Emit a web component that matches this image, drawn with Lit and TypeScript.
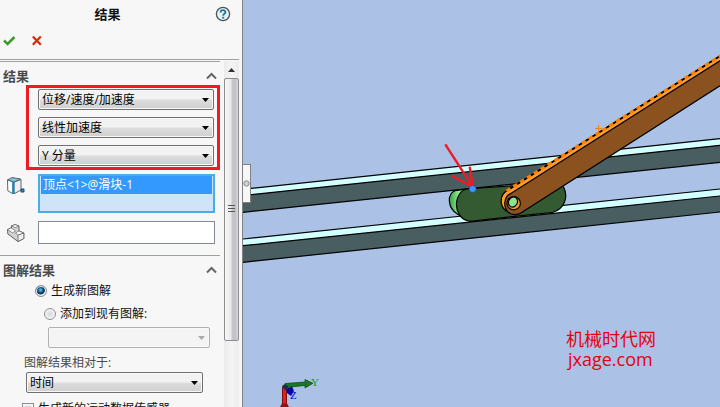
import { LitElement, html, css, svg } from "lit";
import { customElement, property } from "lit/decorators.js";

const controls = css`
  * { box-sizing: border-box; }
  select, input, button { font: inherit; margin: 0; }
  .combo { position: relative; display: block; height: 21px; }
  .combo select {
    appearance: none; width: 100%; height: 21px; padding: 0 16px 0 3px;
    border: 1px solid #707070; border-radius: 2px; color: #000; line-height: 19px;
    background: linear-gradient(#f2f2f2 0 48%, #dddddd 52%, #cfcfcf);
    box-shadow: inset 0 0 0 1px #f8f8f8;
  }
  .combo select:disabled { border-color: #adb2b5; background: #f4f4f4; opacity: 1; }
  .combo svg { position: absolute; right: 5px; top: 9px; width: 7px; height: 4px; fill: #000; pointer-events: none; }
  .combo select:disabled + svg { fill: #aaa; }
`;

const combo = (label: string, value: string, disabled = false) => html`
  <span class="combo">
    <select aria-label=${label} ?disabled=${disabled}><option>${value}</option></select>
    <svg viewBox="0 0 7 4"><path d="M0 0h7L3.5 4z"/></svg>
  </span>`;

@customElement("panel-section")
class PanelSection extends LitElement {
  @property() heading = "";
  static styles = css`
    :host { display: block; border-top: 1px solid #a0a0a0; }
    header { box-sizing: border-box; display: flex; align-items: center; justify-content: space-between; height: 23px; padding: 4px 3px 0; }
    h2 { margin: 0; font-size: 13px; line-height: 18px; font-weight: 700; color: #4a4a4a; }
    button { display: flex; padding: 0; border: 0; background: none; }
    svg { width: 11px; height: 8px; fill: none; stroke: #666; stroke-width: 2; }
  `;
  render() {
    return html`<header><h2>${this.heading}</h2>
      <button aria-label="折叠"><svg viewBox="0 0 11 8"><path d="M1 6.5L5.5 2L10 6.5"/></svg></button>
    </header><slot></slot>`;
  }
}

@customElement("property-panel")
class PropertyPanel extends LitElement {
  static styles = [controls, css`
    :host { display: flex; flex-direction: column; background: #f7f7f7; border-right: 1px solid #808080; overflow: hidden; }
    .title { display: flex; align-items: center; height: 27px; padding-right: 11px; }
    h1 { flex: 1; margin: 0; text-align: center; font-size: 13px; line-height: 20px; color: #111; }
    button { display: flex; padding: 0; border: 0; background: none; }
    .help svg { width: 16px; height: 16px; }
    .actions { display: flex; align-items: center; gap: 16px; height: 27px; padding-left: 3px; }
    .actions svg { width: 13px; height: 11px; }
    .scroll { flex: 1; min-height: 0; display: flex; gap: 4px; margin: 5px 3px 0 0; border-top: 1px solid #a0a0a0; padding-top: 1px; }
    .form { flex: 1; min-width: 0; overflow: hidden; }
    .marked { display: flex; flex-direction: column; gap: 7px; margin-left: 26px; padding: 1px 3px 1px 9px; border: 3px solid #ed1c24; }
    .picks { display: grid; grid-template-columns: 38px 1fr; row-gap: 8px; padding: 4px 5px 11px 0; }
    .picks > svg { width: 18px; height: 18px; margin: 3px 0 0 7px; }
    ul { list-style: none; margin: 0; padding: 0 1px; height: 39px; border: 2px solid #4aaee6; background: #cfe4f8; }
    li { height: 18px; line-height: 18px; padding-left: 2px; background: #3399ff; color: #fff; }
    .picks input { width: 100%; height: 23px; border: 1px solid #828799; background: #fff; }
    .options { padding: 2px 0 0 35px; }
    label { display: flex; align-items: center; gap: 4px; height: 20px; color: #111; white-space: nowrap; }
    input[type="radio"] {
      appearance: none; width: 12px; height: 12px; border: 1px solid #8b8f92; border-radius: 50%;
      background: radial-gradient(#d4d6d9, #f5f5f5 75%); box-shadow: inset 0 0 0 1px #f4f4f4;
    }
    input[type="radio"]:checked { background: radial-gradient(circle at 45% 40%, #7fd0f0, #15618f 28%, #0b3050 50%, #d9dde0 60%); }
    .second { margin: 3px 0 3px 9px; }
    .existing { margin: 0 10px 0 13px; }
    .relative { height: 18px; margin-top: 6px; padding-left: 24px; color: #4a4a4a; }
    .time { margin: 0 17px 0 26px; }
    .sensor { margin: 6px 0 0 22px; }
    input[type="checkbox"] { appearance: none; width: 12px; height: 12px; border: 1px solid #8b8f92; background: #d0d3d8; box-shadow: inset 0 0 0 2px #f4f4f4; }
    .bar { flex: 0 0 15px; display: flex; flex-direction: column; background: linear-gradient(90deg, #ebebeb, #f4f4f4 50%, #ececec); }
    .up { flex: 0 0 17px; align-items: center; justify-content: center; }
    .up svg { width: 7px; height: 4px; }
    .thumb {
      flex: 0 0 76%; display: flex; align-items: center; justify-content: center; border: 1px solid #8d8d8d; border-radius: 2px;
      background: linear-gradient(90deg, #f6f6f6, #eaeaec 45%, #c6c6ca 55%, #c0c0c6 80%, #dcdce0);
    }
    .thumb svg { width: 7px; height: 8px; }
  `];
  render() {
    return html`
      <div class="title">
        <h1>结果</h1>
        <button class="help" aria-label="帮助"><svg viewBox="0 0 16 16">
          <circle cx="8" cy="8" r="6.6" fill="#e9f0f3" stroke="#4b555b" stroke-width="1.3"/>
          <path d="M5.6 6.4C5.6 3.4 10.5 3.5 10.4 6.2C10.3 7.8 8.2 7.8 8.2 9.7" fill="none" stroke="#1d79a5" stroke-width="1.9"/>
          <path d="M7.2 10.8h2v1.8h-2z" fill="#1d79a5"/></svg></button>
      </div>
      <div class="actions">
        <button aria-label="确定"><svg viewBox="0 0 13 11"><path d="M1 5.5L4.6 9L11.5 2" fill="none" stroke="#3d9d27" stroke-width="2.6"/></svg></button>
        <button aria-label="取消"><svg viewBox="0 0 13 11"><path d="M.8 1.5L8.8 9.8M8.8 1.5L.8 9.8" fill="none" stroke="#d82a0c" stroke-width="2.3"/></svg></button>
      </div>
      <div class="scroll">
        <div class="form">
          <panel-section heading="结果">
            <div class="marked">
              ${combo("类别", "位移/速度/加速度")}
              ${combo("子类别", "线性加速度")}
              ${combo("结果分量", "Y 分量")}
            </div>
            <div class="picks">
              <svg viewBox="0 0 18 18" stroke-linejoin="round">
                <path d="M.5 3L5 .5L13.5 2L7 5.2z" fill="#79c5e5" stroke="#4a5a62" stroke-width=".9"/>
                <path d="M.5 3L6 5V16.8L.8 13.8z" fill="#fff" stroke="#555" stroke-width=".9"/>
                <path d="M7 5.2L14 2.5V13L7 16.8z" fill="#eee" stroke="#555" stroke-width=".9"/>
                <path d="M6.3 5V17" stroke="#178ac4" stroke-width="2.2"/>
                <path d="M14 12h3v3h-3z" fill="#168ac4" stroke="#184f6f"/>
              </svg>
              <ul role="listbox" aria-label="选取的零部件"><li role="option" aria-selected="true">顶点&lt;1&gt;@滑块-1</li></ul>
              <svg viewBox="0 0 18 18" stroke="#555" stroke-width=".9" stroke-linejoin="round">
                <path d="M.5 5.5L4.3 4V2L8 .6L12 2V7L16.8 9V14.5L11 17.5L.8 10z" fill="#d2d2d2"/>
                <path d="M4.3 2L8 .6L12 2L8.5 3.5zM.5 5.5L4.3 4L8.5 7L5.5 8.8zM8.5 9L12 7L16.8 9L11.3 11.2z" fill="#fff" stroke-width=".6"/>
                <path d="M11 11.2L16.8 9V14.5L11 17.5z" fill="#f0f0f0" stroke-width=".7"/>
              </svg>
              <input type="text" aria-label="参考零部件">
            </div>
          </panel-section>
          <panel-section heading="图解结果">
            <div class="options">
              <label><input type="radio" name="plot" checked>生成新图解</label>
              <label class="second"><input type="radio" name="plot">添加到现有图解:</label>
              <div class="existing">${combo("现有图解", "", true)}</div>
            </div>
            <label class="relative">图解结果相对于:</label>
            <div class="time">${combo("图解结果相对于", "时间")}</div>
            <label class="sensor"><input type="checkbox">生成新的运动数据传感器</label>
          </panel-section>
        </div>
        <div class="bar">
          <button class="up" aria-label="向上滚动"><svg viewBox="0 0 7 4"><path d="M0 4h7L3.5 0z" fill="#333"/></svg></button>
          <div class="thumb"><svg viewBox="0 0 7 8"><path d="M0 .5h7M0 3.5h7M0 6.5h7" stroke="#555"/></svg></div>
        </div>
      </div>`;
  }
}

const rail = (l: number[], r: number[]) => svg`
  <path d="M243 ${l[0]}L720 ${r[0]}V${r[1]}L243 ${l[1]}z" fill="#d4ffff"/>
  <path d="M243 ${l[1]}L720 ${r[1]}V${r[2]}L243 ${l[2]}z" fill="#495e61"/>
  ${l.map((y, i) => svg`<path d="M243 ${y}L720 ${r[i]}" stroke="#000" stroke-width="1.2"/>`)}`;

@customElement("model-view")
class ModelView extends LitElement {
  static styles = css`
    :host { display: block; position: relative; overflow: hidden; background: #abc2e6; }
    .scene { display: block; width: 100%; height: 100%; }
    .tab { position: absolute; left: -1px; top: 164px; width: 9px; height: 39px; padding: 0; display: flex; align-items: center; justify-content: center; border: 1px solid #808080; border-left: 0; background: #f7f7f7; }
    .tab svg { width: 7px; height: 7px; }
    .mark { font-family: "Open Sans", "Noto Sans CJK SC", sans-serif; font-size: 18px; fill: #e60012; }
    .axis { font: 11px "Liberation Serif", serif; }
  `;
  render() {
    return html`
      <svg class="scene" viewBox="243 0 477 407" preserveAspectRatio="xMinYMin slice">
        ${rail([189.2, 195.5, 212.3], [138.7, 145.3, 162.3])}
        ${rail([239, 245.7, 262.3], [189, 196, 212])}
        <defs><linearGradient id="cap"><stop offset="0" stop-color="#3f9a48"/><stop offset=".45" stop-color="#8cf08c"/><stop offset="1" stop-color="#6fd377"/></linearGradient></defs>
        <g stroke="#000" stroke-width="1.2">
          <path d="M468 189L455 190.7C447 194 447 208 458 214.5L470 221z" fill="url(#cap)"/>
          <path d="M467 189L552 183C558 182 562 184 564 188C568 197 565 208 553 212.3L470 221.3C460 220 456 211 456.5 203C457 196 461 190 467 189z" fill="#335a30"/>
          <path d="M730 49.7L506.5 191C500 195 499 205 506 211L515 200L730 60z" fill="#ff9d2e"/>
          <path d="M730 54.4L510 193.9C504 197 503 207 508 212C512 216 519 215.5 524 211L730 79.3z" fill="#8b5220"/>
          <circle cx="513.7" cy="203.2" r="6.7" fill="#f39a35"/>
          <ellipse cx="513" cy="202" rx="4.4" ry="5.2" fill="#8ee58f" transform="rotate(25 513 202)"/>
        </g>
        <path d="M506.5 191L730 49.7" stroke="#000" stroke-width="1.6"/>
        <path d="M506.5 191L730 49.7" stroke="#ff8000" stroke-width="3" stroke-dasharray="4.6 3.5"/>
        <path d="M595 128.5h7M598.5 125v7" stroke="#ff8000"/>
        <path d="M445.3 144.3L473 187.3M452 175.7L473 187.3L469.7 166.7" fill="none" stroke="#ed1c24" stroke-width="2.4"/>
        <circle cx="472.7" cy="189" r="3.5" fill="#4295ff" stroke="#194a91" stroke-width=".7"/>
        <path d="M282.5 387h4v20h-4z" fill="#e02020" stroke="#7b1010"/>
        <path d="M280 407L282 403.5h5L289 407z" fill="#8a1515"/>
        <path d="M285 383.5L305 382V379.5L313 383.3L305 388V385.5L286 387.5z" fill="#167a20" stroke="#0c4515" stroke-width=".7"/>
        <path d="M282 386L285 384L289 387L285 390z" fill="#182f45"/>
        <path d="M286 389L292 386.5L294 391L291 396L287 393z" fill="#0808a0"/>
        <text class="axis" x="311" y="386" fill="#009b16">Y</text>
        <text class="axis" x="290" y="399" fill="#0000f0">Z</text>
        <text class="mark" x="566" y="346">机械时代网</text>
        <text class="mark" x="568" y="366">jxage.com</text>
      </svg>
      <button class="tab" aria-label="折叠面板"><svg viewBox="0 0 7 7"><circle cx="3.5" cy="3.5" r="2.7" fill="#d0d0d0" stroke="#888"/></svg></button>`;
  }
}

@customElement("app-root")
class AppRoot extends LitElement {
  static styles = css`
    :host { display: flex; height: 100vh; overflow: hidden; font: 12px/18px "Open Sans", "Noto Sans CJK SC", sans-serif; }
    property-panel { flex: 0 0 243px; box-sizing: border-box; }
    model-view { flex: 1; min-width: 0; }
  `;
  render() {
    return html`<property-panel></property-panel><model-view></model-view>`;
  }
}
